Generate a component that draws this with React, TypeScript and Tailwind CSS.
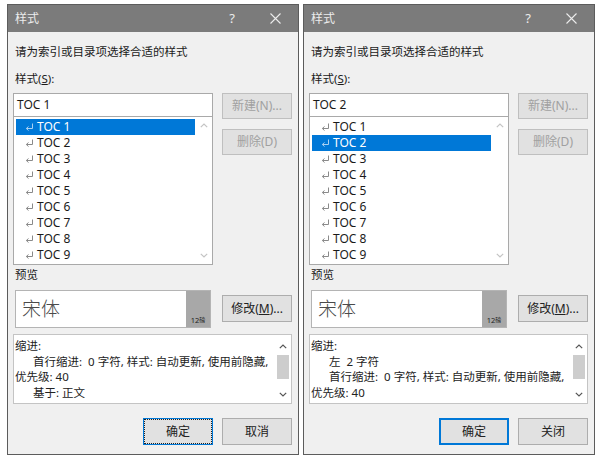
import type { ReactNode } from "react";

const font = "font-['Noto_Sans','Noto_Sans_CJK_SC',sans-serif]";

const tocItems = ["TOC 1", "TOC 2", "TOC 3", "TOC 4", "TOC 5", "TOC 6", "TOC 7", "TOC 8", "TOC 9"];

function ReturnMark({ light }: { light?: boolean }) {
  return (
    <svg width="9" height="8" viewBox="0 0 9 8" className="shrink-0">
      <path
        d="M7.5 0.5V5.5H1.5M3.5 3.5L1.3 5.5L3.5 7.5"
        fill="none"
        stroke={light ? "#a9d0f2" : "#8a8a8a"}
        strokeWidth="1"
      />
    </svg>
  );
}

function Chevron({ down, color }: { down?: boolean; color: string }) {
  return (
    <svg width="8" height="5" viewBox="0 0 8 5">
      <path
        d={down ? "M0.8 0.8L4 4L7.2 0.8" : "M0.8 4.2L4 1L7.2 4.2"}
        fill="none"
        stroke={color}
        strokeWidth="1.2"
      />
    </svg>
  );
}

function Btn({
  children,
  disabled,
  focus,
  className = "",
}: {
  children: ReactNode;
  disabled?: boolean;
  focus?: "dotted" | "thick";
  className?: string;
}) {
  const border =
    focus === "thick"
      ? "border-2 border-[#0078d7]"
      : focus === "dotted"
        ? "border border-[#0078d7]"
        : disabled
          ? "border border-[#bfbfbf]"
          : "border border-[#adadad]";
  return (
    <div
      className={`flex w-[70px] items-center justify-center bg-[#e1e1e1] text-[12px] ${border} ${
        disabled ? "text-[#a0a0a0]" : "text-[#222]"
      } ${className}`}
    >
      {focus === "dotted" ? (
        <div className="flex h-full w-full items-center justify-center border border-dotted border-[#222]">
          {children}
        </div>
      ) : (
        children
      )}
    </div>
  );
}

function Dialog({
  selected,
  lines,
  closeLabel,
  focus,
}: {
  selected: number;
  lines: { text: string; indent?: boolean }[];
  closeLabel: string;
  focus: "dotted" | "thick";
}) {
  return (
    <div className="flex h-[451px] w-[292px] shrink-0 flex-col border border-[#5c5c5c] bg-[#f0f0f0]">
      <div className="flex h-[27px] shrink-0 items-center bg-[#7b7b7b] text-[12px] text-[#ececec]">
        <span className="pl-[7px]">样式</span>
        <span className="ml-auto w-[40px] text-center text-[13px]">?</span>
        <span className="flex w-[46px] justify-center">
          <svg width="11" height="11" viewBox="0 0 11 11">
            <path d="M0.5 0.5L10.5 10.5M10.5 0.5L0.5 10.5" stroke="#ececec" strokeWidth="1.1" />
          </svg>
        </span>
      </div>

      <div className="flex flex-1 flex-col pl-[5px] pr-[6px] text-[12px] leading-[16px] text-[#1a1a1a]">
        <div className="mt-[12px] pl-[2px] text-[11.5px]">请为索引或目录项选择合适的样式</div>
        <div className="mt-[11px] pl-[2px] text-[11.5px]">
          样式(<span className="underline">S</span>):
        </div>

        <div className="mt-[6px] flex gap-[9px]">
          <div className="flex w-[200px] flex-col">
            <div className="flex h-[24px] items-center border border-[#a9a9a9] bg-white pl-[3px] text-[12px]">
              {tocItems[selected]}
            </div>
            <div className="flex h-[148px] border border-t-0 border-[#a9a9a9] bg-white">
              <div className="flex flex-1 flex-col pl-[2px] pt-[2px]">
                {tocItems.map((t, i) => (
                  <div
                    key={t}
                    className={`flex h-[16px] items-center gap-[3px] pl-[9px] ${
                      i === selected ? "bg-[#0078d7] text-white" : ""
                    }`}
                  >
                    <ReturnMark light={i === selected} />
                    <span>{t}</span>
                  </div>
                ))}
              </div>
              <div className="flex w-[17px] flex-col items-center justify-between py-[6px]">
                <Chevron color="#c4c4c4" />
                <Chevron down color="#c4c4c4" />
              </div>
            </div>
          </div>
          <div className="flex flex-col gap-[10px]">
            <Btn disabled className="h-[26px]">
              新建(N)...
            </Btn>
            <Btn disabled className="h-[26px]">
              删除(D)
            </Btn>
          </div>
        </div>

        <div className="mt-[2px] pl-[2px] text-[11.5px]">预览</div>

        <div className="mt-[7px] flex gap-[11px]">
          <div className="ml-[2px] flex h-[38px] w-[196px] border border-[#b4b4b4] bg-white">
            <div className="flex flex-1 items-center pl-[6px] text-[19px] font-light text-[#4a4a4a]">宋体</div>
            <div className="flex w-[24px] items-end justify-center bg-[#a8a8a8] pb-[2px] text-[7.5px] leading-[9px] text-[#222]">
              12 <span className="text-[6px]">磅</span>
            </div>
          </div>
          <Btn className="mt-[5px] h-[27px]">
            <span>
              修改(<span className="underline">M</span>)...
            </span>
          </Btn>
        </div>

        <div className="mt-[6px] flex h-[70px] border border-[#c4c4c4] bg-white">
          <div className="flex flex-1 flex-col pl-[1px] pt-[3px] text-[11.5px] leading-[15.6px] text-[#222]">
            {lines.map((l, i) => (
              <div key={i} className={`whitespace-pre ${l.indent ? "pl-[18px]" : ""}`}>
                {l.text}
              </div>
            ))}
          </div>
          <div className="flex w-[16px] flex-col items-center pt-[9px]">
            <Chevron color="#555" />
            <div className="mt-[6px] h-[24px] w-[12px] bg-[#cdcdcd]" />
            <div className="mt-[13px]">
              <Chevron down color="#555" />
            </div>
          </div>
        </div>

        <div className="mt-[14px] flex justify-end gap-[9px]">
          <Btn focus={focus} className="h-[27px] w-[69px]">
            确定
          </Btn>
          <Btn className="h-[27px] w-[69px]">{closeLabel}</Btn>
        </div>
      </div>
    </div>
  );
}

export default function App() {
  return (
    <div className={`flex h-[462px] w-[603px] gap-[4px] bg-white pl-[7px] pt-[4px] ${font}`}>
      <Dialog
        selected={0}
        focus="dotted"
        closeLabel="取消"
        lines={[
          { text: "缩进:" },
          { text: "首行缩进:  0 字符, 样式: 自动更新, 使用前隐藏,", indent: true },
          { text: "优先级: 40" },
          { text: "基于: 正文", indent: true },
        ]}
      />
      <Dialog
        selected={1}
        focus="thick"
        closeLabel="关闭"
        lines={[
          { text: "缩进:" },
          { text: "左  2 字符", indent: true },
          { text: "首行缩进:  0 字符, 样式: 自动更新, 使用前隐藏,", indent: true },
          { text: "优先级: 40" },
        ]}
      />
    </div>
  );
}
